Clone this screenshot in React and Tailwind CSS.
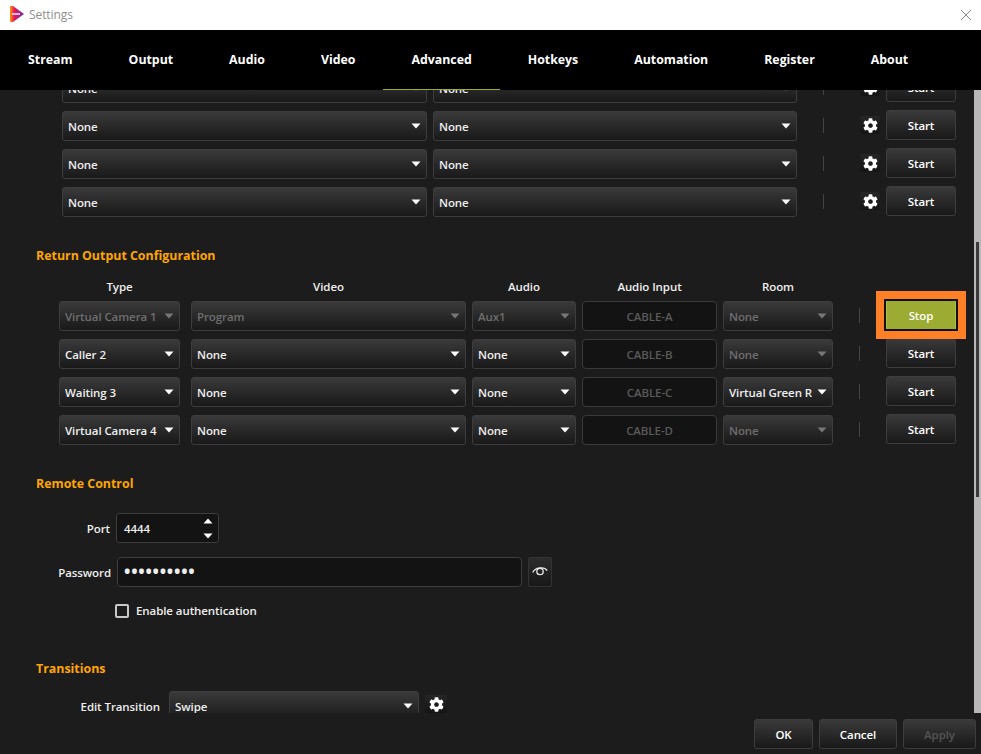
import React from "react";
import { FaCog } from "react-icons/fa";

const font = "font-['Open_Sans','Noto_Sans',sans-serif]";
const grad = "bg-gradient-to-b from-[#3a3a3a] to-[#191919] border border-[#3d3d3d] rounded-[3px]";

function Arrow({ off }) {
  return (
    <svg width="10" height="6" viewBox="0 0 10 6" className="shrink-0 mb-[1px]">
      <path d="M0.5 0.5 H9.5 L5 5.5 Z" fill={off ? "#777777" : "#ffffff"} />
    </svg>
  );
}

function Select({ w, text, off }) {
  return (
    <div className={`${w} h-[30px] shrink-0 flex items-center pl-[5px] pr-[5px] gap-[5px] ${grad}`}>
      <span className={`flex-1 pt-[2px] overflow-hidden whitespace-nowrap ${off ? "text-[#6e6e6e]" : "text-[#eeeeee]"}`}>{text}</span>
      <Arrow off={off} />
    </div>
  );
}

function Sep({ ml }) {
  return <div className={`${ml} w-px h-[15px] mt-[7px] bg-[#444444] shrink-0`} />;
}

function Gear({ cls }) {
  return (
    <div className={`${cls} h-[18px] flex items-center justify-center rounded-[2px] bg-gradient-to-b from-[#262626] to-[#141414] shrink-0`}>
      <FaCog size={15} color="#ffffff" />
    </div>
  );
}

function Btn({ w, label, off, cls = "" }) {
  return (
    <div className={`${w} ${cls} h-[30px] pt-[2px] shrink-0 flex items-center justify-center ${grad} ${off ? "text-[#555555]" : "text-white"}`}>
      {label}
    </div>
  );
}

function Start() {
  return <Btn w="w-[70px]" label="Start" cls="ml-[26px] -mt-px" />;
}

function Stop() {
  return (
    <div className="relative ml-[26px] -mt-px w-[70px] h-[30px] pt-[2px] shrink-0 flex items-center justify-center rounded-[2px] bg-[#9cab32] border border-[#b0bd55] text-white">
      Stop
      <div className="absolute -inset-x-[11px] -inset-y-[10px] border-[8px] border-[#ff8026] pointer-events-none">
        <div className="w-full h-full border-2 border-[#101010]" />
      </div>
    </div>
  );
}

function Heading({ children, cls }) {
  return <div className={`${cls} h-[20px] pl-[36px] pt-[2px] flex items-center text-[#ffa500] text-[12.4px] font-bold tracking-normal`}>{children}</div>;
}

function OutRow() {
  return (
    <div className="flex items-start h-[30px] pl-[62px]">
      <Select w="w-[365px]" text="None" />
      <div className="ml-[6px]"><Select w="w-[364px]" text="None" /></div>
      <Sep ml="ml-[26px]" />
      <Gear cls="ml-[36px] w-[20px] mt-[5px]" />
      <Btn w="w-[70px]" label="Start" cls="ml-[6px] -mt-px" />
    </div>
  );
}

function Cable({ text }) {
  return (
    <div className="ml-[6px] w-[135px] h-[30px] pt-[2px] shrink-0 flex items-center justify-center bg-[#131313] border border-[#3a3a3a] rounded-[4px] text-[#5a5a5a]">
      {text}
    </div>
  );
}

function RetRow({ type, video, audio, cable, room, typeOff, roomOff, stop }) {
  return (
    <div className="flex items-start h-[30px] pl-[59px]">
      <Select w="w-[121px]" text={type} off={typeOff} />
      <div className="ml-[11px]"><Select w="w-[275px]" text={video} off={typeOff} /></div>
      <div className="ml-[6px]"><Select w="w-[104px]" text={audio} off={typeOff} /></div>
      <Cable text={cable} />
      <div className="ml-[6px]"><Select w="w-[110px]" text={room} off={roomOff} /></div>
      <Sep ml="ml-[26px]" />
      {stop ? <Stop /> : <Start />}
    </div>
  );
}

const tabs = ["Stream", "Output", "Audio", "Video", "Advanced", "Hotkeys", "Automation", "Register", "About"];

export default function App() {
  return (
    <div className={`${font} w-[981px] h-[754px] flex flex-col overflow-hidden bg-[#1c1c1c] text-[11.5px] tracking-[-0.08px] font-semibold text-[#eeeeee]`}>
      <div className="h-[30px] shrink-0 bg-white flex items-center pl-[10px]">
        <svg width="14" height="16" viewBox="0 0 14 16" className="mb-[2px]">
          <defs>
            <linearGradient id="lg" x1="0" y1="0" x2="1" y2="0">
              <stop offset="0" stopColor="#ff9d00" />
              <stop offset="0.3" stopColor="#e8185c" />
              <stop offset="1" stopColor="#6a2aa8" />
            </linearGradient>
          </defs>
          <path d="M0 0 H3 L14 8 L3 16 H0 Z" fill="url(#lg)" />
          <rect x="2" y="7" width="8" height="2" fill="#ffffff" opacity="0.7" />
        </svg>
        <span className="ml-[5px] font-normal text-[#8e8e8e] text-[12px]">Settings</span>
        <svg width="12" height="12" viewBox="0 0 12 12" className="ml-auto mr-[9px]">
          <path d="M1 1 L11 11 M11 1 L1 11" stroke="#8a8a8a" strokeWidth="1" fill="none" />
        </svg>
      </div>

      <div className="h-[60px] shrink-0 bg-black flex text-[12.34px] tracking-normal font-bold text-white relative z-10">
        {tabs.map((t) => (
          <div key={t} className={`px-[28px] pt-[2px] flex items-center border-b ${t === "Advanced" ? "border-[#9cab32]" : "border-black"}`}>
            {t}
          </div>
        ))}
      </div>

      <div className="h-[623px] shrink-0 flex overflow-hidden">
        <div className="flex-1 overflow-hidden">
          <div className="-mt-[17px]">
            <div className="flex flex-col gap-[8px]">
              <OutRow />
              <OutRow />
              <OutRow />
              <OutRow />
            </div>

            <Heading cls="mt-[28px]">Return Output Configuration</Heading>
            <div className="flex mt-[11px] h-[20px] pt-[2px] items-center pl-[59px] text-center">
              <div className="w-[121px]">Type</div>
              <div className="ml-[11px] w-[275px]">Video</div>
              <div className="ml-[6px] w-[104px]">Audio</div>
              <div className="ml-[6px] w-[135px]">Audio Input</div>
              <div className="ml-[6px] w-[110px]">Room</div>
            </div>
            <div className="flex flex-col gap-[8px] mt-[5px]">
              <RetRow type="Virtual Camera 1" video="Program" audio="Aux1" cable="CABLE-A" room="None" typeOff roomOff stop />
              <RetRow type="Caller 2" video="None" audio="None" cable="CABLE-B" room="None" roomOff />
              <RetRow type="Waiting 3" video="None" audio="None" cable="CABLE-C" room="Virtual Green Room" />
              <RetRow type="Virtual Camera 4" video="None" audio="None" cable="CABLE-D" room="None" roomOff />
            </div>

            <Heading cls="mt-[28px]">Remote Control</Heading>
            <div className="flex items-center mt-[20px] h-[30px]">
              <div className="w-[110px] pt-[2px] text-right">Port</div>
              <div className="ml-[6px] w-[103px] h-[30px] flex items-center justify-between pl-[7px] pr-[5px] bg-[#131313] border border-[#3d3d3d] rounded-[3px]">
                <span className="pt-[2px]">4444</span>
                <div className="flex flex-col gap-[9px]">
                  <svg width="10" height="6" viewBox="0 0 10 6"><path d="M0.5 5.5 H9.5 L5 0.5 Z" fill="#ffffff" /></svg>
                  <svg width="10" height="6" viewBox="0 0 10 6"><path d="M0.5 0.5 H9.5 L5 5.5 Z" fill="#ffffff" /></svg>
                </div>
              </div>
            </div>
            <div className="flex items-center mt-[14px] h-[30px]">
              <div className="w-[111px] pt-[2px] text-right">Password</div>
              <div className="ml-[6px] w-[405px] h-[30px] flex items-center pl-[6px] bg-[#131313] border border-[#3d3d3d] rounded-[4px] text-[#eeeeee] text-[17px] tracking-[0.75px] font-bold">
                ••••••••••
              </div>
              <div className="ml-[6px] w-[24px] h-[30px] -mt-px flex items-center justify-center rounded-[2px] border border-[#333333] bg-gradient-to-b from-[#2c2c2c] to-[#181818]">
                <svg width="16" height="11" viewBox="0 0 16 11" fill="none" stroke="#e8e8e8">
                  <path d="M0.8 6.5 C3 1.5 12 0 15.2 4.5" strokeWidth="1.3" />
                  <circle cx="8" cy="5.5" r="3.2" strokeWidth="1.3" />
                </svg>
              </div>
            </div>
            <div className="flex items-center mt-[17px] h-[14px] pl-[115px]">
              <div className="w-[14px] h-[14px] rounded-[2px] border-2 border-[#c8c8c8] bg-[#1c1c1c]" />
              <span className="ml-[7px]">Enable authentication</span>
            </div>

            <Heading cls="mt-[40px]">Transitions</Heading>
            <div className="flex items-start mt-[13px] h-[30px]">
              <div className="w-[160px] h-[30px] pt-[2px] flex items-center justify-end">Edit Transition</div>
              <div className="ml-[9px]"><Select w="w-[250px]" text="Swipe" /></div>
              <Gear cls="ml-[6px] w-[22px] mt-[4px]" />
            </div>
          </div>
        </div>
        <div className="w-[7px] shrink-0 bg-[#b8b8b8] pt-[152px] pl-[2px]">
          <div className="w-[3px] h-[255px] bg-[#3a3a3a]" />
        </div>
      </div>

      <div className="flex-1 flex justify-end items-start pt-[6px] pr-[5px] gap-[6px]">
        <Btn w="w-[59px]" label="OK" />
        <Btn w="w-[78px]" label="Cancel" />
        <Btn w="w-[73px]" label="Apply" off />
      </div>
    </div>
  );
}
